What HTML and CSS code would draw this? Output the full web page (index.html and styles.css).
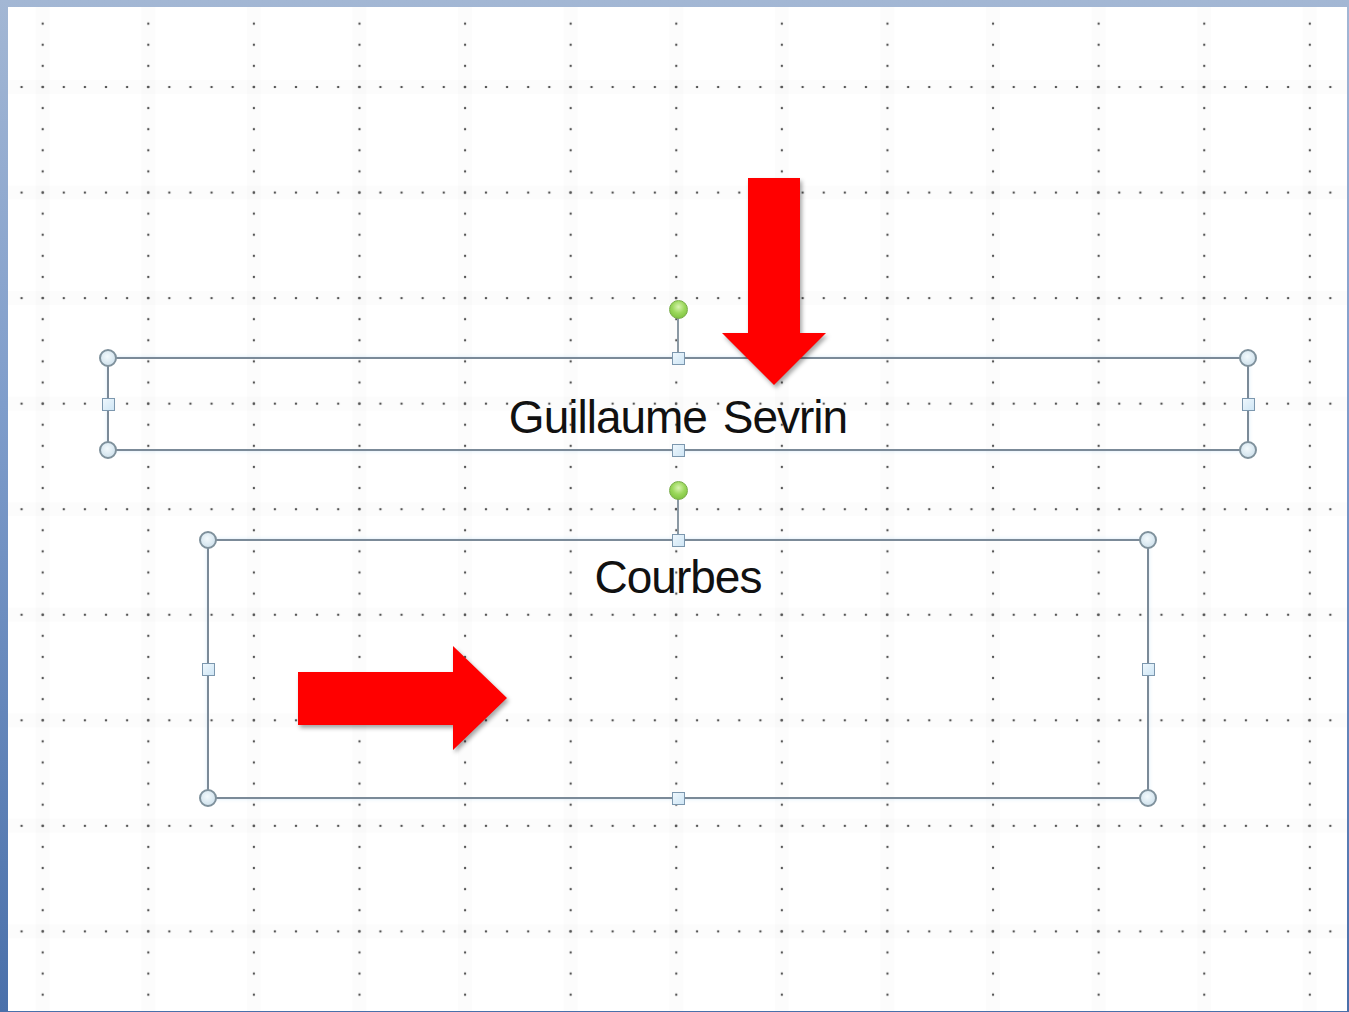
FILE: index.html
```html
<!DOCTYPE html>
<html lang="fr">
<head>
    <meta charset="UTF-8">
    <meta name="viewport" content="width=device-width, initial-scale=1.0">
    <title>Diapositive - Courbes</title>
    <link rel="stylesheet" href="styles.css">
</head>
<body>
    <div class="window">
        <div class="slide">
            <!-- title placeholder, selected -->
            <div class="shape shape-title">
                <span class="rotate-line"></span>
                <span class="handle rotate"></span>
                <span class="handle corner tl"></span>
                <span class="handle corner tr"></span>
                <span class="handle corner bl"></span>
                <span class="handle corner br"></span>
                <span class="handle side top"></span>
                <span class="handle side bottom"></span>
                <span class="handle side left"></span>
                <span class="handle side right"></span>
                <div class="shape-text title-text">Guillaume Sevrin</div>
            </div>

            <!-- content placeholder, selected -->
            <div class="shape shape-body">
                <span class="rotate-line"></span>
                <span class="handle rotate"></span>
                <span class="handle corner tl"></span>
                <span class="handle corner tr"></span>
                <span class="handle corner bl"></span>
                <span class="handle corner br"></span>
                <span class="handle side top"></span>
                <span class="handle side bottom"></span>
                <span class="handle side left"></span>
                <span class="handle side right"></span>
                <div class="shape-text body-text">Courbes</div>
            </div>

            <svg class="arrow arrow-down" viewBox="0 0 110 215" width="110" height="215">
                <polygon points="26,0 78,0 78,155 104,155 52,207 0,155 26,155"/>
            </svg>
            <svg class="arrow arrow-right" viewBox="0 0 215 110" width="215" height="110">
                <polygon points="0,26 155,26 155,0 209,52 155,104 155,79 0,79"/>
            </svg>
        </div>
    </div>
</body>
</html>
```

FILE: styles.css
```css
html, body {
    margin: 0;
    padding: 0;
    height: 100%;
    overflow: hidden;
}

body {
    font-family: "Liberation Sans", Arial, sans-serif;
    background-color: #fff;
}

.window {
    display: flex;
    box-sizing: border-box;
    height: 100vh;
    padding: 7px 2px 1px 8px;
    background: linear-gradient(to bottom, #a3b7d4 0%, #7f9dcb 40%, #4a70aa 100%);
}

.slide {
    flex: 1;
    position: relative;
    overflow: hidden;
    background-color: #fff;
    /* powerpoint style dotted guides: dots every 21.12px on lines every 105.6px */
    background-image:
        radial-gradient(circle, #555 0 1px, rgba(85, 85, 85, 0) 1.6px),
        radial-gradient(circle, #555 0 1px, rgba(85, 85, 85, 0) 1.6px),
        linear-gradient(90deg, rgba(0, 0, 0, 0.01) 0 14px, rgba(0, 0, 0, 0) 14px),
        linear-gradient(180deg, rgba(0, 0, 0, 0.01) 0 14px, rgba(0, 0, 0, 0) 14px);
    background-size:
        105.6px 21.12px,
        21.12px 105.55px,
        105.6px 100%,
        100% 105.55px;
    background-position:
        -18.1px 6.08px,
        3.02px 27.25px,
        27.7px 0,
        0 73px;
}

.shape {
    position: absolute;
    box-sizing: border-box;
    border: 2px solid #7b8a98;
    box-shadow: 0 0 4px rgba(170, 210, 240, 0.45);
}

.shape-title {
    left: 99px;
    top: 350px;
    width: 1142px;
    height: 94px;
}

.shape-body {
    left: 199px;
    top: 532px;
    width: 942px;
    height: 260px;
}

.shape-text {
    position: absolute;
    left: 0;
    right: 0;
    text-align: center;
    font-size: 46px;
    line-height: 46px;
    letter-spacing: -1px;
    color: #111;
    white-space: pre;
}

.title-text {
    top: 35px;
    word-spacing: 4px;
}

.body-text {
    top: 13px;
}

.handle {
    position: absolute;
    box-sizing: border-box;
    z-index: 2;
}

.corner {
    width: 18px;
    height: 18px;
    border-radius: 50%;
    border: 2px solid #7f919c;
    background: radial-gradient(circle at 45% 40%, #f4fafd 0%, #d3e4ee 70%, #c2d6e2 100%);
}

.corner.tl { left: -10px; top: -10px; }
.corner.tr { right: -10px; top: -10px; }
.corner.bl { left: -10px; bottom: -10px; }
.corner.br { right: -10px; bottom: -10px; }

.side {
    width: 13px;
    height: 13px;
    border: 1.5px solid #7c97ae;
    background: linear-gradient(135deg, #eef7fd 0%, #cfe6f5 100%);
}

.side.top { left: 50%; top: -7.5px; margin-left: -6.5px; }
.side.bottom { left: 50%; bottom: -7.5px; margin-left: -6.5px; }
.side.left { left: -7.5px; top: 50%; margin-top: -6.5px; }
.side.right { right: -7.5px; top: 50%; margin-top: -6.5px; }

.rotate {
    left: 50%;
    top: -59px;
    width: 19px;
    height: 19px;
    margin-left: -9.5px;
    border-radius: 50%;
    border: 1.5px solid #78ad48;
    background: radial-gradient(circle at 50% 35%, #d8f3b0 0%, #9bd85c 45%, #72b834 100%);
}

.rotate-line {
    position: absolute;
    left: 50%;
    top: -42px;
    width: 2px;
    height: 40px;
    margin-left: -1px;
    background-color: #8a98a3;
}

.shape-body .rotate {
    top: -60px;
}

.shape-body .rotate-line {
    top: -43px;
    height: 41px;
}

.arrow {
    position: absolute;
    overflow: visible;
    filter: drop-shadow(2px 3px 2px rgba(0, 0, 0, 0.35));
}

.arrow polygon {
    fill: #ff0000;
}

.arrow-down {
    left: 714px;
    top: 171px;
}

.arrow-right {
    left: 290px;
    top: 639px;
}
```
